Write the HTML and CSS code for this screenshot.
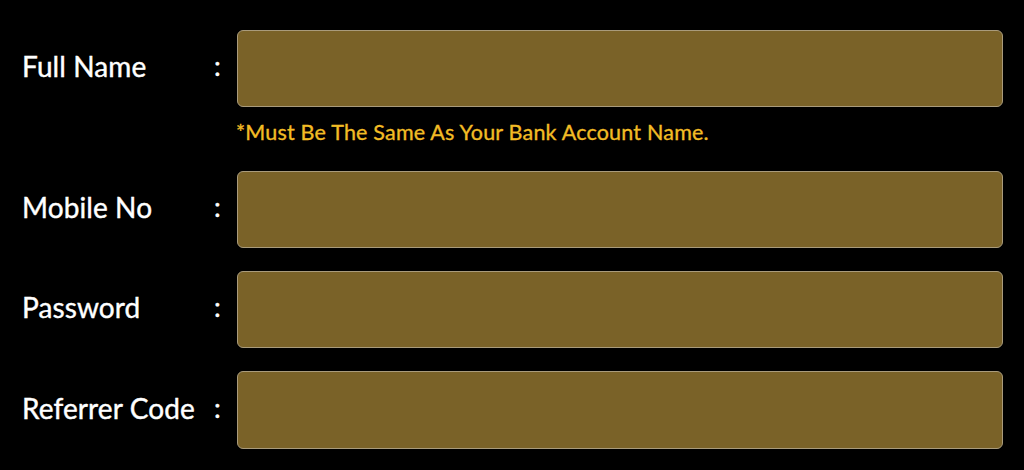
FILE: index.html
```html
<!DOCTYPE html>
<html>
<head>
<meta charset="utf-8">
<link rel="stylesheet" href="styles.css">
</head>
<body>
<form class="form">
  <div class="row">
    <label class="label">Full Name</label>
    <span class="colon">:</span>
    <input class="field" type="text">
  </div>
  <div class="hint">*Must Be The Same As Your Bank Account Name.</div>
  <div class="row">
    <label class="label">Mobile No</label>
    <span class="colon">:</span>
    <input class="field" type="text">
  </div>
  <div class="row">
    <label class="label">Password</label>
    <span class="colon">:</span>
    <input class="field" type="password">
  </div>
  <div class="row">
    <label class="label">Referrer Code</label>
    <span class="colon">:</span>
    <input class="field" type="text">
  </div>
</form>
</body>
</html>
```
FILE: styles.css
```css
html, body {
  margin: 0;
  padding: 0;
  background: #000;
  height: 100%;
}
body {
  font-family: "Lato", "Open Sans", sans-serif;
  color: #fff;
}
.form {
  padding: 30px 21px 0 22px;
  display: flex;
  flex-direction: column;
}
.row {
  display: flex;
  align-items: center;
  margin-bottom: 23px;
}
.row:last-child .field {
  height: 78px;
}
.label {
  width: 192px;
  font-size: 28px;
  letter-spacing: 0.1px;
  line-height: 30px;
  margin-top: -5px;
  -webkit-text-stroke: 0.4px #fff;
}
.colon {
  width: 23px;
  font-size: 27px;
  line-height: 30px;
  margin-top: -5px;
  -webkit-text-stroke: 0.4px #fff;
}
.field {
  flex: 1;
  height: 77px;
  box-sizing: border-box;
  background: #7a6228;
  border: 1.5px solid #a99b7c;
  border-radius: 6px;
  outline: none;
  margin: 0;
}
.hint {
  margin: -10px 0 27px 214px;
  font-size: 21.5px;
  line-height: 24px;
  color: #f2bc25;
  letter-spacing: 0.2px;
  -webkit-text-stroke: 0.35px #f2bc25;
}
```
